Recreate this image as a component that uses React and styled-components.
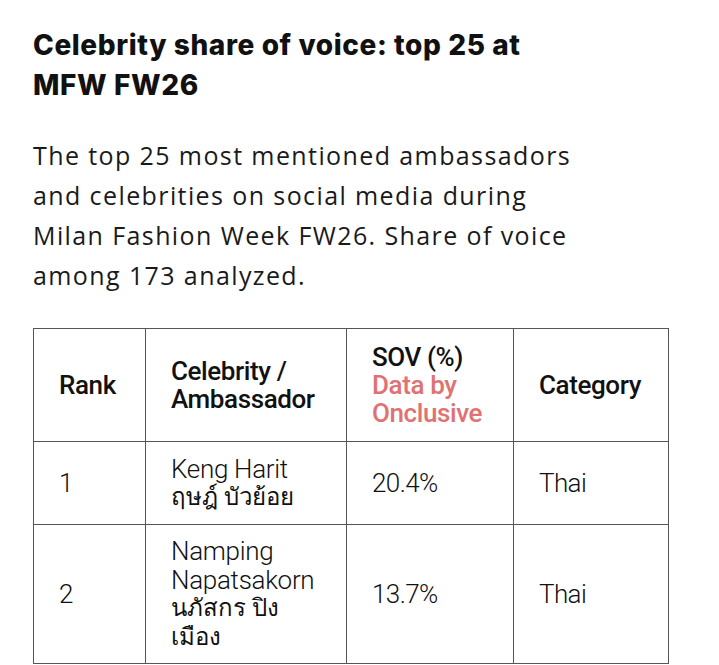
import React from "react";
import styled, { createGlobalStyle } from "styled-components";

const GlobalStyle = createGlobalStyle`
  html, body {
    margin: 0;
    padding: 0;
    background: #ffffff;
  }
  body {
    font-family: "Roboto", "Noto Sans", sans-serif;
    color: #111111;
  }
`;

const rows = [
  { rank: 1, name: ["Keng Harit", "ฤษฎ์ บัวย้อย"], sov: "20.4%", category: "Thai" },
  { rank: 2, name: ["Namping", "Napatsakorn", "นภัสกร ปิง", "เมือง"], sov: "13.7%", category: "Thai" },
];

const isThai = (s) => /[\u0E00-\u0E7F]/.test(s);

const App = () => {
  return (
    <>
      <GlobalStyle />
      <Page>
        <Title>Celebrity share of voice: top 25 at MFW FW26</Title>
        <Intro>
          The top 25 most mentioned ambassadors and celebrities on social media during
          Milan Fashion Week FW26. Share of voice among 173 analyzed.
        </Intro>
        <Table>
          <colgroup>
            <col style={{ width: 112 }} />
            <col style={{ width: 201 }} />
            <col style={{ width: 167 }} />
            <col style={{ width: 155 }} />
          </colgroup>
          <thead>
            <tr>
              <Th>Rank</Th>
              <Th>Celebrity /<br />Ambassador</Th>
              <Th>
                SOV (%)
                <Credit>Data by<br />Onclusive</Credit>
              </Th>
              <Th>Category</Th>
            </tr>
          </thead>
          <tbody>
            {rows.map((r) => (
              <tr key={r.rank}>
                <Td>{r.rank}</Td>
                <Td>
                  {r.name.map((line, i) => (
                    <NameLine key={i} $thai={isThai(line)}>{line}</NameLine>
                  ))}
                </Td>
                <Td>{r.sov}</Td>
                <Td>{r.category}</Td>
              </tr>
            ))}
          </tbody>
        </Table>
      </Page>
    </>
  );
};

const Page = styled.div`
  padding: 25px 0 0 33px;
  width: 640px;
`;

const Title = styled.h1`
  margin: 0;
  width: 530px;
  font-family: "Inter", "Roboto", sans-serif;
  font-weight: 800;
  font-size: 28px;
  line-height: 40px;
  letter-spacing: 0.6px;
  color: #111;
`;

const Intro = styled.p`
  margin: 30px 0 0 0;
  width: 560px;
  font-family: "Open Sans", "Noto Sans", sans-serif;
  font-weight: 400;
  font-size: 25px;
  line-height: 40px;
  letter-spacing: 1.4px;
  color: #1a1a1a;
`;

const Table = styled.table`
  margin-top: 33px;
  border-collapse: collapse;
  table-layout: fixed;
  width: 635px;
`;

const Th = styled.th`
  border: 1px solid #555;
  padding: 14px 25px;
  height: 113px;
  box-sizing: border-box;
  text-align: left;
  vertical-align: middle;
  font-family: "Roboto", sans-serif;
  font-weight: 500;
  font-size: 26px;
  line-height: 28px;
  letter-spacing: -0.4px;
  color: #111;
`;

const Credit = styled.span`
  display: block;
  color: #e07272;
`;

const Td = styled.td`
  border: 1px solid #555;
  padding: 12px 25px;
  height: 83px;
  box-sizing: border-box;
  text-align: left;
  vertical-align: middle;
  font-family: "Roboto", "Noto Sans", sans-serif;
  font-weight: 300;
  font-size: 26px;
  line-height: 28.5px;
  letter-spacing: -0.6px;
  color: #111;
`;

const NameLine = styled.div`
  font-weight: ${(p) => (p.$thai ? 400 : 300)};
  letter-spacing: ${(p) => (p.$thai ? "0" : "-0.3px")};
  font-size: ${(p) => (p.$thai ? "24px" : "26px")};
`;

export default App;
